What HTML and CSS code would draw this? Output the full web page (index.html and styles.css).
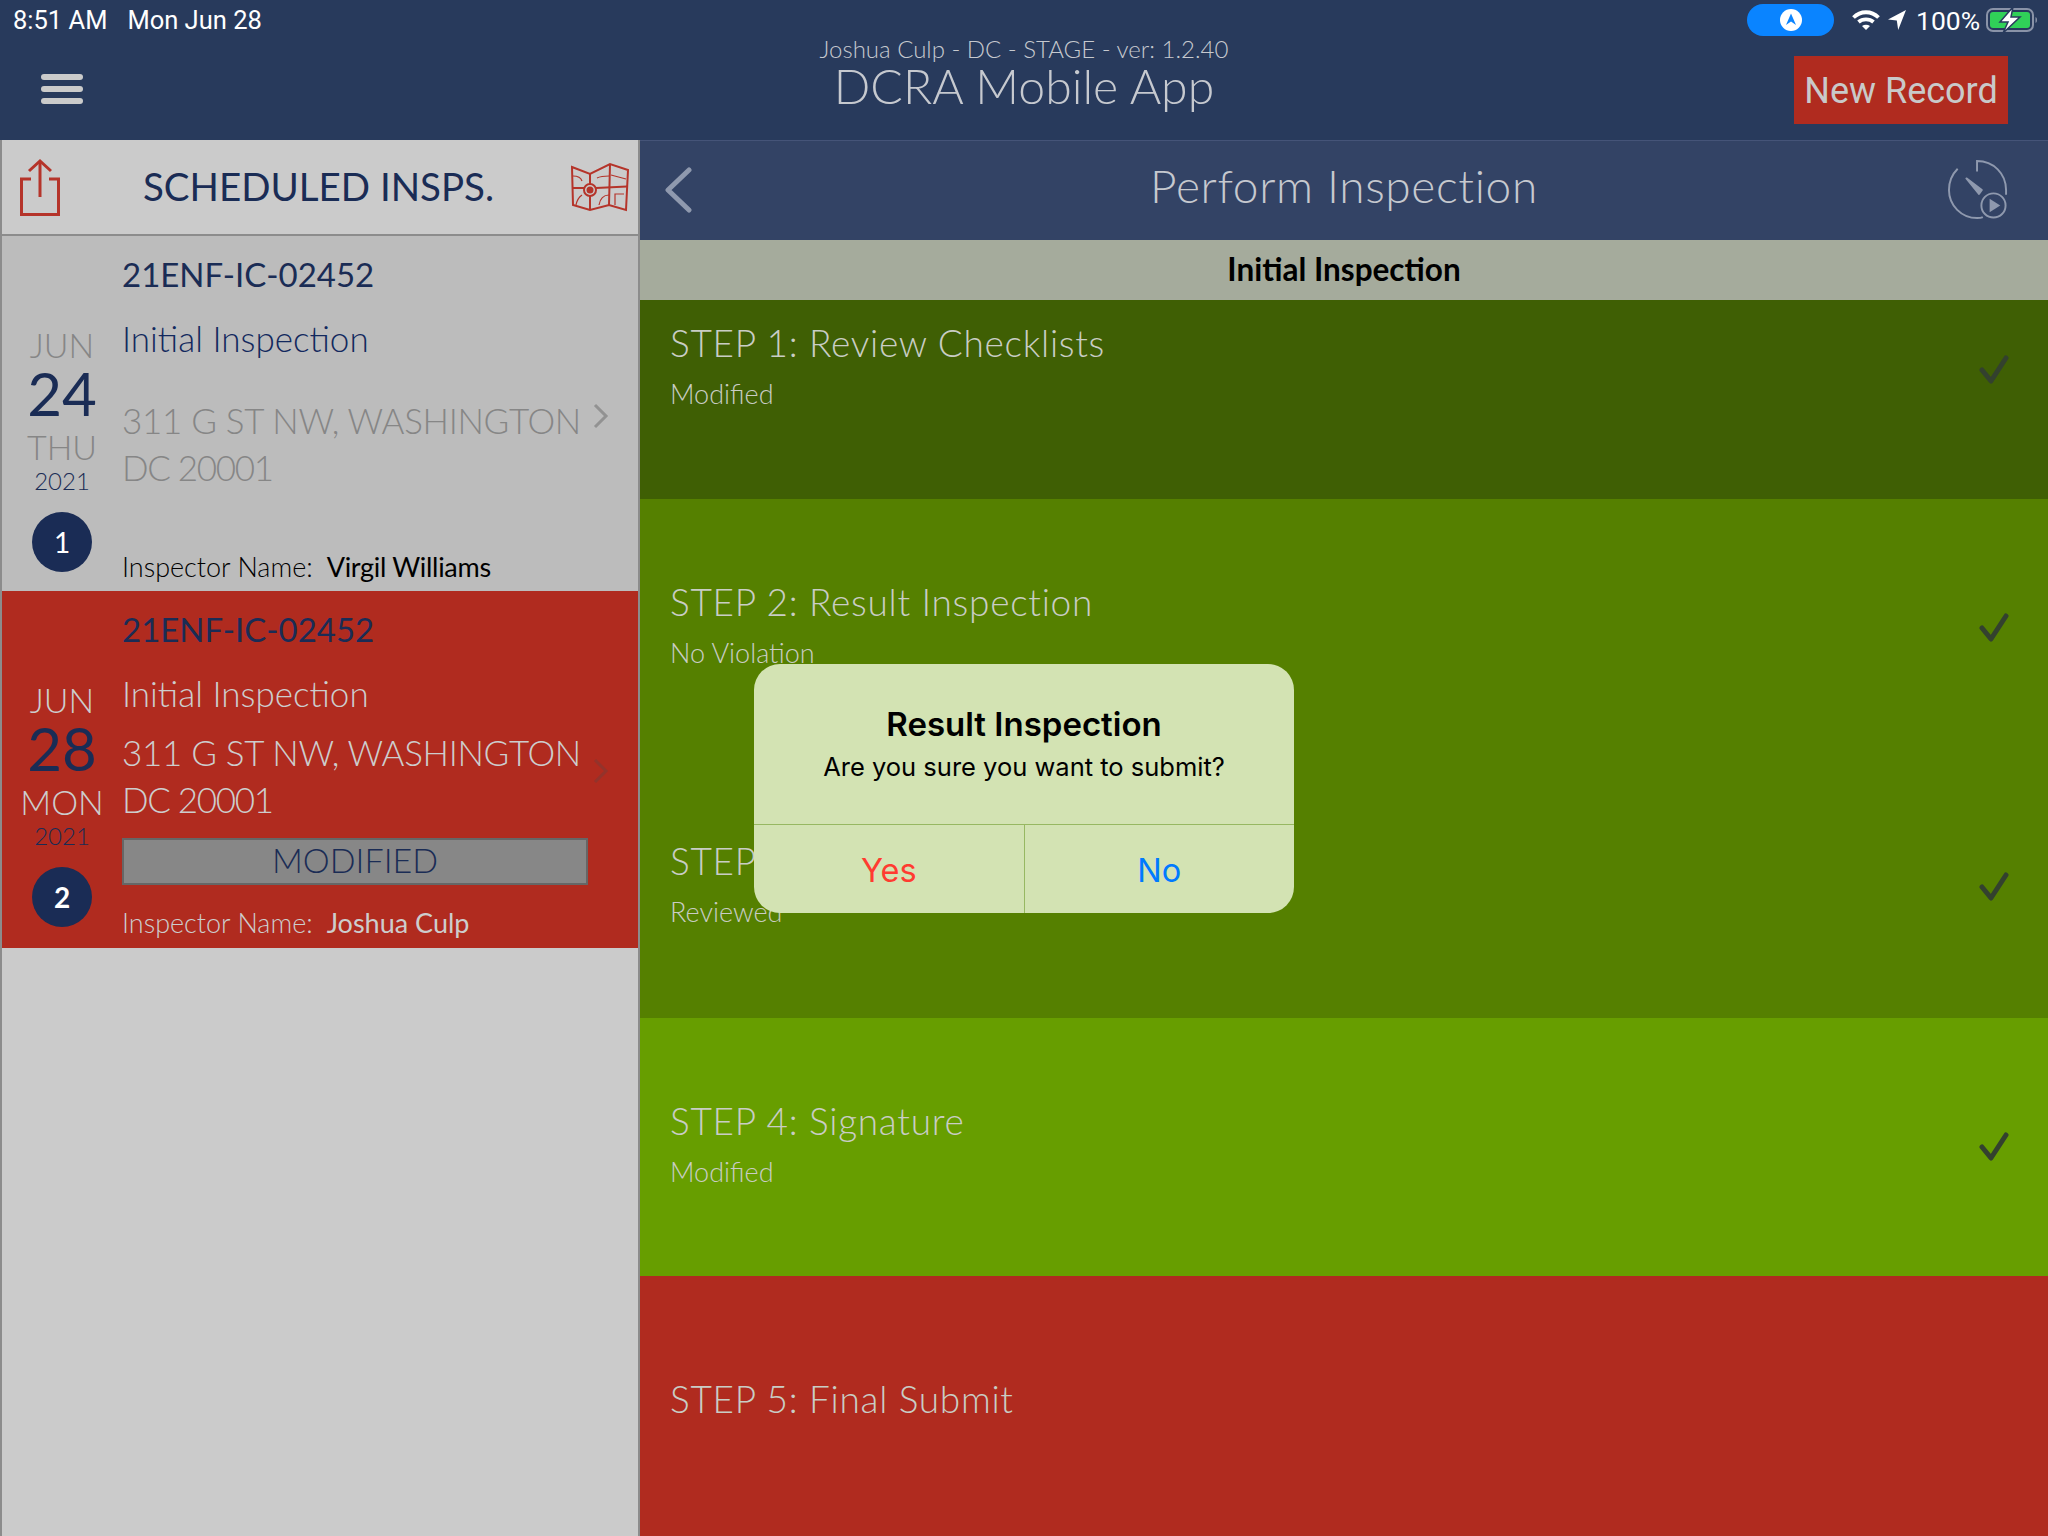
FILE: index.html
```html
<!DOCTYPE html>
<html lang="en">
<head>
    <meta charset="UTF-8">
    <meta name="viewport" content="width=device-width, initial-scale=1.0">
    <title>DCRA Mobile App</title>
    <link rel="stylesheet" href="styles.css">
</head>
<body>
    <header class="top-bar">
        <div class="status-bar">
            <div class="status-time"><span>8:51 AM</span><span>Mon Jun 28</span></div>
            <div class="status-right">
                <div class="nav-pill">
                    <svg width="22" height="22" viewBox="0 0 22 22"><circle cx="11" cy="11" r="11" fill="#fff"/><path d="M11 4.5 L16 16 L11 12.6 L6 16 Z" fill="#0a84ff"/></svg>
                </div>
                <svg class="wifi" width="28" height="22" viewBox="0 0 28 22" fill="none" stroke="#fff" stroke-width="3.8"><path d="M1.5 8.5 C8.5 1.5 19.5 1.5 26.5 8.5"/><path d="M6.5 13 C10.5 9.5 17.5 9.5 21.5 13"/><path d="M14 21 L10 17 C12.4 15.4 15.6 15.4 18 17 Z" fill="#fff" stroke="none"/></svg>
                <svg class="arrow" width="18" height="20" viewBox="0 0 18 20"><path d="M18 0 L0 9.5 L8.8 10.4 L10.2 20 Z" fill="#fff"/></svg>
                <span class="battery-pct">100%</span>
                <svg class="battery" width="54" height="26" viewBox="0 0 54 26">
                    <rect x="2" y="2" width="46" height="22" rx="6" fill="none" stroke="#8a93a8" stroke-width="2"/>
                    <rect x="5" y="5" width="40" height="16" rx="3" fill="#30d158"/>
                    <path d="M50.5 10 C52.5 10.5 52.5 15.5 50.5 16 Z" fill="#8a93a8"/>
                    <path d="M28 0 L15 15 L23 15 L18 26 L35 10 L26 10 Z" fill="#fff" stroke="#283a5c" stroke-width="1.5"/>
                </svg>
            </div>
        </div>
        <div class="nav-row">
            <div class="hamburger"><span></span><span></span><span></span></div>
            <div class="app-title">
                <div class="app-user">Joshua Culp - DC - STAGE - ver: 1.2.40</div>
                <div class="app-name">DCRA Mobile App</div>
            </div>
            <div class="new-record">New Record</div>
        </div>
    </header>

    <main class="content">
        <aside class="side-panel">
            <div class="side-head">
                <svg class="share-icon" width="44" height="60" viewBox="0 0 44 60" fill="none" stroke="#b5342a" stroke-width="3"><path d="M13 22 H3.5 V57.5 H40.5 V22 H31"/><path d="M22 40 V4"/><path d="M11 14 L22 4 L33 14"/></svg>
                <div class="side-title">SCHEDULED INSPS.</div>
                <svg class="map-icon" width="58" height="50" viewBox="0 0 58 50" fill="none" stroke="#b5342a" stroke-width="2">
                    <path d="M1 5 L19 12 L39 2 L57 8 L55 48 L38 43 L19 48 L2 43 Z"/>
                    <path d="M19 12 V22 M19 34 V48 M39 2 L38 43"/>
                    <path d="M2 26 H13 M25 26 L56 24.5"/>
                    <path stroke-width="1.2" d="M2 14 C7 14 10 16 11 19 M5 43 C6 38 8 35 11 33 M26 16 C30 14 34 14 38 14 M40 13 L55 17 M28 43 C29 37 32 33 38 33 M44 43 V32 H53"/>
                    <circle cx="19" cy="28" r="6"/>
                    <circle cx="19" cy="28" r="3.5" fill="#b5342a" stroke="none"/>
                </svg>
            </div>

            <div class="insp-card card-muted">
                <div class="date-col">
                    <div class="date-month">JUN</div>
                    <div class="date-day">24</div>
                    <div class="date-week">THU</div>
                    <div class="date-year">2021</div>
                    <div class="date-num">1</div>
                </div>
                <div class="insp-body">
                    <div class="insp-id">21ENF-IC-02452</div>
                    <div class="insp-type">Initial Inspection</div>
                    <div class="insp-addr addr-gap">311 G ST NW, WASHINGTON<br><span class="addr-zip">DC 20001</span></div>
                    <div class="insp-name"><span>Inspector Name:</span><span class="insp-person">Virgil Williams</span></div>
                </div>
                <svg class="row-chevron" width="16" height="26" viewBox="0 0 16 26" fill="none" stroke="currentColor" stroke-width="3"><path d="M2 2 L13 13 L2 24"/></svg>
            </div>

            <div class="insp-card card-active">
                <div class="date-col">
                    <div class="date-month">JUN</div>
                    <div class="date-day">28</div>
                    <div class="date-week">MON</div>
                    <div class="date-year">2021</div>
                    <div class="date-num">2</div>
                </div>
                <div class="insp-body">
                    <div class="insp-id">21ENF-IC-02452</div>
                    <div class="insp-type">Initial Inspection</div>
                    <div class="insp-addr">311 G ST NW, WASHINGTON<br><span class="addr-zip">DC 20001</span></div>
                    <div class="insp-badge">MODIFIED</div>
                    <div class="insp-name"><span>Inspector Name:</span><span class="insp-person">Joshua Culp</span></div>
                </div>
                <svg class="row-chevron" width="16" height="26" viewBox="0 0 16 26" fill="none" stroke="currentColor" stroke-width="3"><path d="M2 2 L13 13 L2 24"/></svg>
            </div>
        </aside>

        <section class="main-panel">
            <div class="main-head">
                <svg class="back-icon" width="28" height="46" viewBox="0 0 28 46" fill="none" stroke="#8f99ae" stroke-width="5" stroke-linecap="round" stroke-linejoin="round"><path d="M25 3 L4 23 L25 43"/></svg>
                <div class="main-title">Perform Inspection</div>
                <svg class="gauge-icon" width="60" height="60" viewBox="0 0 62 62" fill="none" stroke="#8f99ae" stroke-width="2">
                    <path d="M30 12 V1 C47 1 60 14 60 31 V36"/>
                    <path d="M10 9 C4 15 1 22 1 31 C1 47 14 60 30 60 C32 60 34 60 36 59"/>
                    <path d="M19 19 L35 31 L32 35 Z" fill="#8f99ae" stroke-linejoin="round"/>
                    <circle cx="47" cy="47" r="12.5"/>
                    <path d="M43 40 L54 47 L43 54 Z" fill="#8f99ae" stroke="none"/>
                </svg>
            </div>
            <div class="sub-head">Initial Inspection</div>

            <div class="step step-1">
                <div class="step-text"><div class="step-name">STEP 1: Review Checklists</div><div class="step-note">Modified</div></div>
                <svg class="step-check" width="34" height="32" viewBox="0 0 34 32" fill="none" stroke="#33412e" stroke-width="5" stroke-linecap="round" stroke-linejoin="round"><path d="M5 15 L14 26 L29 3"/></svg>
            </div>
            <div class="step step-2">
                <div class="step-text"><div class="step-name">STEP 2: Result Inspection</div><div class="step-note">No Violation</div></div>
                <svg class="step-check" width="34" height="32" viewBox="0 0 34 32" fill="none" stroke="#33412e" stroke-width="5" stroke-linecap="round" stroke-linejoin="round"><path d="M5 15 L14 26 L29 3"/></svg>
            </div>
            <div class="step step-3">
                <div class="step-text"><div class="step-name">STEP 3: Result Inspection</div><div class="step-note">Reviewed</div></div>
                <svg class="step-check" width="34" height="32" viewBox="0 0 34 32" fill="none" stroke="#33412e" stroke-width="5" stroke-linecap="round" stroke-linejoin="round"><path d="M5 15 L14 26 L29 3"/></svg>
            </div>
            <div class="step step-4">
                <div class="step-text"><div class="step-name">STEP 4: Signature</div><div class="step-note">Modified</div></div>
                <svg class="step-check" width="34" height="32" viewBox="0 0 34 32" fill="none" stroke="#33412e" stroke-width="5" stroke-linecap="round" stroke-linejoin="round"><path d="M5 15 L14 26 L29 3"/></svg>
            </div>
            <div class="step step-5">
                <div class="step-text"><div class="step-name">STEP 5: Final Submit</div></div>
            </div>
        </section>
    </main>

    <div class="alert">
        <div class="alert-body">
            <div class="alert-title">Result Inspection</div>
            <div class="alert-msg">Are you sure you want to submit?</div>
        </div>
        <div class="alert-actions">
            <div class="alert-btn btn-yes">Yes</div>
            <div class="alert-btn btn-no">No</div>
        </div>
    </div>
</body>
</html>
```

FILE: styles.css
```css
html, body {
    margin: 0;
    padding: 0;
}
body {
    width: 2048px;
    height: 1536px;
    overflow: hidden;
    font-family: Lato, "Open Sans", sans-serif;
    background-color: #cbcbcb;
}

/* top bar */
.top-bar {
    height: 140px;
    background-color: #283a5c;
    color: #ffffff;
    position: relative;
}
.status-bar {
    height: 40px;
    display: flex;
    justify-content: space-between;
    align-items: center;
    font-family: Roboto, sans-serif;
    font-size: 25.5px;
}
.status-time {
    display: flex;
    gap: 20px;
    padding-left: 13px;
    padding-bottom: 1px;
}
.status-right {
    display: flex;
    align-items: center;
    padding-right: 9px;
}
.nav-pill {
    width: 87px;
    height: 32px;
    border-radius: 16px;
    background-color: #0a84ff;
    display: flex;
    align-items: center;
    justify-content: center;
    margin-right: 18px;
}
.wifi {
    margin-right: 8px;
}
.arrow {
    margin-right: 10px;
}
.battery-pct {
    width: 62px;
    font-size: 26.5px;
    margin-right: 7px;
}
.nav-row {
    height: 100px;
    display: flex;
    align-items: flex-start;
    justify-content: space-between;
}
.hamburger {
    width: 42px;
    margin: 34px 0 0 41px;
    display: flex;
    flex-direction: column;
    gap: 6px;
}
.hamburger span {
    height: 6px;
    border-radius: 3px;
    background-color: #cbcbcb;
}
.app-title {
    position: absolute;
    left: 0;
    right: 0;
    top: 34px;
    text-align: center;
    color: #c6c9cf;
    font-weight: 300;
}
.app-user {
    font-size: 24px;
    line-height: 30px;
}
.app-name {
    font-size: 48.2px;
    line-height: 54px;
    margin-top: -6px;
}
.new-record {
    width: 214px;
    height: 68px;
    margin: 16px 40px 0 0;
    background-color: #b02b1f;
    color: #c9c9c9;
    font-family: Roboto, sans-serif;
    font-size: 36px;
    line-height: 70px;
    text-align: center;
}

/* layout */
.content {
    display: flex;
    height: 1396px;
}

/* left list */
.side-panel {
    width: 640px;
    box-sizing: border-box;
    border-left: 2px solid #8c8c8c;
    border-right: 2px solid #8c8c8c;
    background-color: #cbcbcb;
}
.side-head {
    height: 94px;
    border-bottom: 2px solid #8c8c8c;
    display: flex;
    align-items: center;
    position: relative;
}
.share-icon {
    margin: 0 0 0 16px;
}
.side-title {
    flex: 1;
    text-align: center;
    color: #1a2c55;
    font-size: 38.5px;
    font-weight: 400;
    padding: 0 0 2px 4px;
}
.map-icon {
    margin-right: 9px;
}
.insp-card {
    height: 355px;
    display: flex;
    position: relative;
}
.card-active {
    height: 357px;
}
.card-muted {
    background-color: #bcbcbc;
    color: #868686;
}
.card-active {
    background-color: #b02b1f;
    color: #cdcdcd;
}
.date-col {
    width: 120px;
    flex-shrink: 0;
    padding-top: 89px;
    text-align: center;
    font-weight: 300;
}
.date-month,
.date-week {
    font-size: 34px;
    line-height: 40px;
}
.date-day {
    font-size: 60px;
    font-weight: 400;
    line-height: 62px;
    margin-top: -3px;
    color: #1a2c55;
}
.date-week {
    margin-top: 3px;
}
.date-year {
    font-size: 24px;
    line-height: 32px;
    margin-top: -2px;
    color: #1a2c55;
}
.date-num {
    width: 60px;
    height: 60px;
    border-radius: 50%;
    margin: 15px auto 0;
    background-color: #1a2c55;
    color: #ffffff;
    font-size: 28px;
    font-weight: 700;
    line-height: 60px;
}
.card-muted .date-num {
    font-weight: 400;
}
.insp-body {
    flex: 1;
    position: relative;
}
.insp-id {
    font-size: 33px;
    line-height: 40px;
    padding-top: 18px;
    color: #1a2c55;
}
.insp-type {
    font-size: 35px;
    line-height: 40px;
    margin-top: 24px;
    font-weight: 300;
}
.card-muted .insp-type {
    color: #12295e;
}
.insp-addr {
    font-size: 35px;
    line-height: 47px;
    letter-spacing: -0.3px;
    margin-top: 16px;
    font-weight: 300;
}
.addr-gap {
    margin-top: 39px;
}
.addr-zip {
    letter-spacing: -1.3px;
}
.insp-badge {
    width: 466px;
    height: 47px;
    box-sizing: border-box;
    margin-top: 15px;
    border: 2px solid #666666;
    background-color: #878787;
    color: #1a2c55;
    font-size: 34px;
    font-weight: 300;
    line-height: 39px;
    text-align: center;
}
.insp-name {
    position: absolute;
    left: 0;
    top: 314px;
    display: flex;
    gap: 14px;
    font-size: 27px;
    line-height: 34px;
    font-weight: 300;
}
.card-active .insp-name {
    top: 315px;
}
.card-muted .insp-name {
    color: #000000;
}
.insp-person {
    font-weight: 400;
    letter-spacing: -0.3px;
}
.card-active .insp-person {
    letter-spacing: 0;
}
.row-chevron {
    position: absolute;
    right: 29px;
    top: 167px;
}
.card-muted .row-chevron {
    color: #929292;
}
.card-active .row-chevron {
    color: #93332b;
}

/* right side */
.main-panel {
    flex: 1;
    display: flex;
    flex-direction: column;
}
.main-head {
    height: 99px;
    border-top: 1px solid #455478;
    background-color: #334365;
    display: flex;
    align-items: center;
    justify-content: space-between;
    padding: 0 40px 0 24px;
    position: relative;
}
.back-icon {
    margin-bottom: 2px;
}
.gauge-icon {
    margin-bottom: 2px;
}
.main-title {
    position: absolute;
    left: 0;
    right: 0;
    margin-top: -10px;
    text-align: center;
    color: #c6c9cf;
    font-size: 46px;
    font-weight: 300;
    letter-spacing: 0.65px;
}
.sub-head {
    height: 60px;
    background-color: #a5ab9c;
    color: #000000;
    font-size: 31.5px;
    font-weight: 700;
    line-height: 59px;
    text-align: center;
}
.step {
    display: flex;
    justify-content: space-between;
    padding: 0 40px 0 30px;
    color: #c9cdc5;
    font-weight: 300;
}
.step-name {
    font-size: 37px;
    line-height: 44px;
    letter-spacing: 0.7px;
}
.step-note {
    font-size: 27px;
    line-height: 32px;
    margin-top: 13px;
}
.step-check {
    margin-right: -3px;
}
.step-1 {
    height: 199px;
    background-color: #3f5f04;
}
.step-1 .step-text {
    padding-top: 21px;
}
.step-1 .step-check {
    margin-top: 55px;
}
.step-2 {
    height: 259px;
    background-color: #558000;
}
.step-3 {
    height: 260px;
    background-color: #558000;
}
.step-4 {
    height: 258px;
    background-color: #679e00;
}
.step-2 .step-text,
.step-3 .step-text,
.step-4 .step-text {
    padding-top: 81px;
}
.step-2 .step-check,
.step-3 .step-check,
.step-4 .step-check {
    margin-top: 114px;
}
.step-5 {
    height: 260px;
    background-color: #b02b1f;
}
.step-5 .step-text {
    padding-top: 101px;
}

/* dialog */
.alert {
    position: absolute;
    left: 754px;
    top: 664px;
    width: 540px;
    height: 249px;
    border-radius: 26px;
    background-color: #d3e3b3;
    display: flex;
    flex-direction: column;
    font-family: Inter, Roboto, sans-serif;
    text-align: center;
}
.alert-body {
    height: 160px;
    border-bottom: 1px solid #97b862;
}
.alert-title {
    font-size: 33px;
    font-weight: 600;
    line-height: 40px;
    padding-top: 40px;
    color: #000000;
}
.alert-msg {
    font-size: 25.5px;
    line-height: 32px;
    margin-top: 7px;
    color: #000000;
}
.alert-actions {
    flex: 1;
    display: flex;
}
.alert-btn {
    flex: 1;
    font-size: 32.5px;
    line-height: 84px;
    padding-top: 4px;
}
.btn-yes {
    color: #ff3b30;
    border-right: 1px solid #97b862;
}
.btn-no {
    color: #007aff;
}
```
